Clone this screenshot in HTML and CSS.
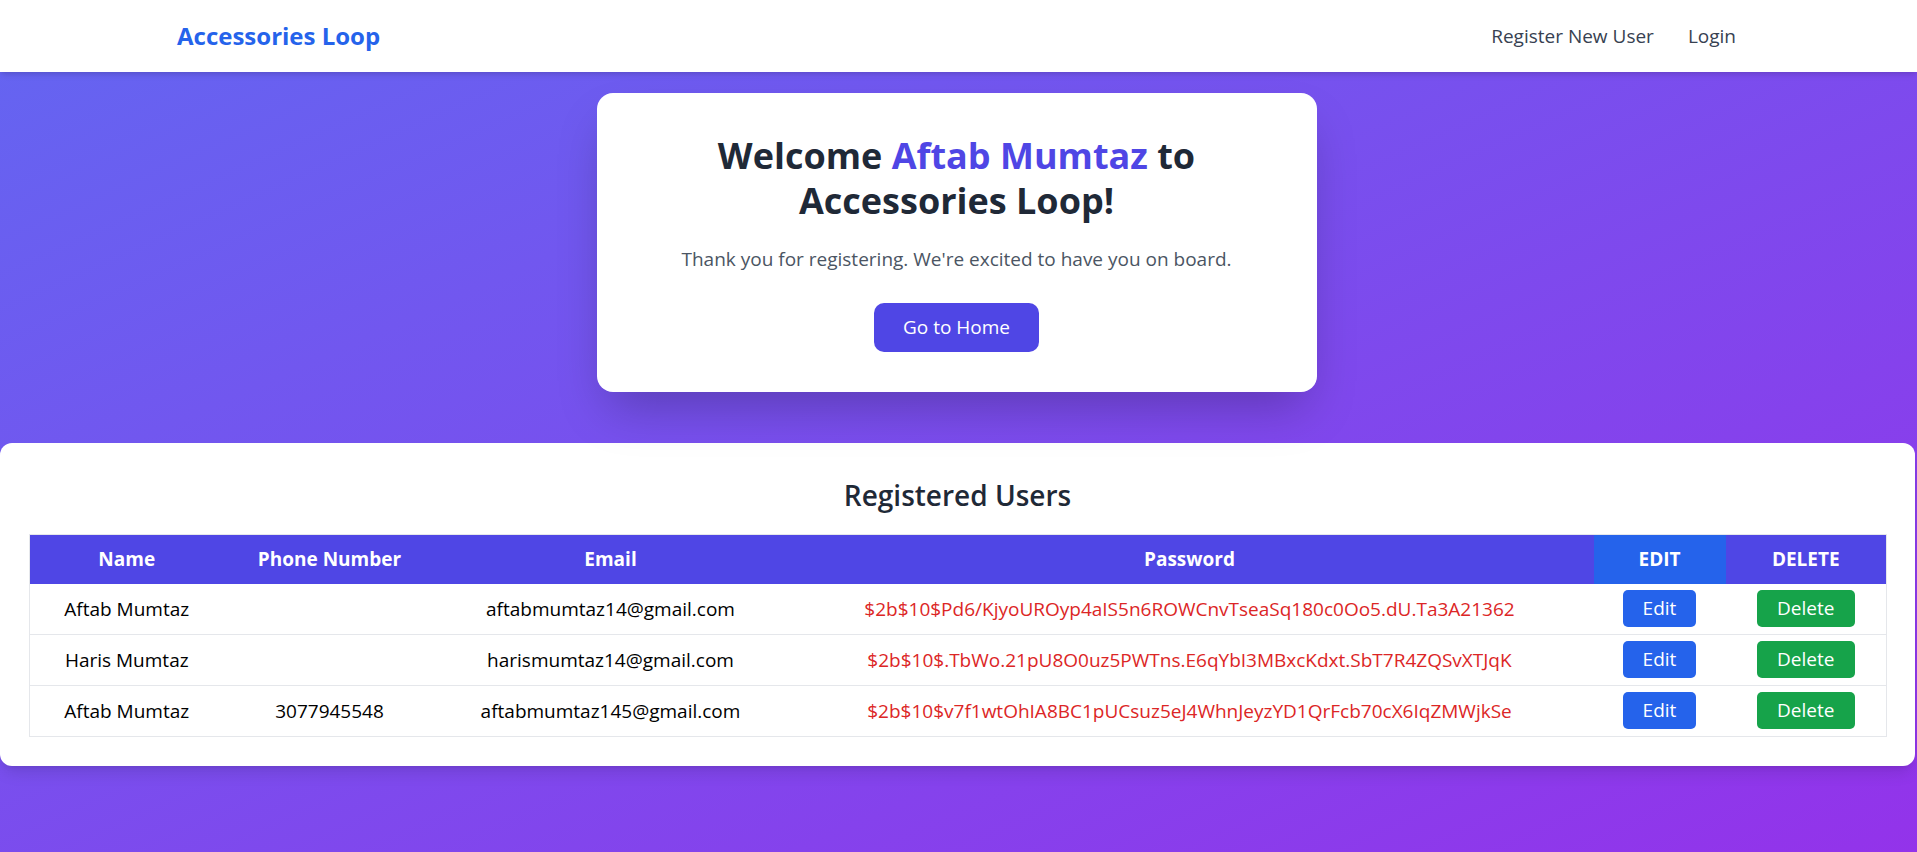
FILE: index.html
```html
<!DOCTYPE html>
<html lang="en">
<head>
<meta charset="utf-8">
<title>Accessories Loop</title>
<link rel="stylesheet" href="styles.css">
</head>
<body>
<div class="page">
  <nav class="navbar">
    <a class="logo" href="#">Accessories Loop</a>
    <div class="nav-links">
      <a href="#">Register New User</a>
      <a href="#">Login</a>
    </div>
  </nav>

  <section class="hero">
    <div class="welcome-card">
      <h1 class="welcome-title">Welcome <span class="accent">Aftab Mumtaz</span> to<br>Accessories Loop!</h1>
      <p class="welcome-text">Thank you for registering. We're excited to have you on board.</p>
      <a class="btn-home" href="#">Go to Home</a>
    </div>
  </section>

  <section class="users-card">
    <h2 class="users-title">Registered Users</h2>
    <table class="users-table">
      <colgroup>
        <col class="c-name"><col class="c-phone"><col class="c-email"><col class="c-pass"><col class="c-edit"><col class="c-del">
      </colgroup>
      <thead>
        <tr>
          <th>Name</th>
          <th>Phone Number</th>
          <th>Email</th>
          <th>Password</th>
          <th class="th-edit">EDIT</th>
          <th>DELETE</th>
        </tr>
      </thead>
      <tbody>
        <tr>
          <td>Aftab Mumtaz</td>
          <td></td>
          <td>aftabmumtaz14@gmail.com</td>
          <td class="pass">$2b$10$Pd6/KjyoUROyp4aIS5n6ROWCnvTseaSq180c0Oo5.dU.Ta3A21362</td>
          <td><button class="btn btn-edit">Edit</button></td>
          <td><button class="btn btn-delete">Delete</button></td>
        </tr>
        <tr>
          <td>Haris Mumtaz</td>
          <td></td>
          <td>harismumtaz14@gmail.com</td>
          <td class="pass">$2b$10$.TbWo.21pU8O0uz5PWTns.E6qYbI3MBxcKdxt.SbT7R4ZQSvXTJqK</td>
          <td><button class="btn btn-edit">Edit</button></td>
          <td><button class="btn btn-delete">Delete</button></td>
        </tr>
        <tr>
          <td>Aftab Mumtaz</td>
          <td>3077945548</td>
          <td>aftabmumtaz145@gmail.com</td>
          <td class="pass">$2b$10$v7f1wtOhIA8BC1pUCsuz5eJ4WhnJeyzYD1QrFcb70cX6IqZMWjkSe</td>
          <td><button class="btn btn-edit">Edit</button></td>
          <td><button class="btn btn-delete">Delete</button></td>
        </tr>
      </tbody>
    </table>
  </section>
</div>
</body>
</html>
```

FILE: styles.css
```css
* { box-sizing: border-box; }

html, body {
  margin: 0;
  padding: 0;
}

body {
  font-family: "Open Sans", "Noto Sans", sans-serif;
  color: #1f2937;
}

.page {
  min-height: 100vh;
  background: linear-gradient(to bottom right, #6366f1, #9333ea);
  padding-bottom: 40px;
}

.navbar {
  height: 72px;
  background: #ffffff;
  display: flex;
  align-items: center;
  justify-content: space-between;
  padding: 0 181px 0 177px;
  box-shadow: 0 4px 6px -1px rgba(0,0,0,0.1), 0 2px 4px -2px rgba(0,0,0,0.1);
  position: relative;
  z-index: 1;
}

.logo {
  font-size: 24px;
  line-height: 32px;
  font-weight: 700;
  color: #2563eb;
  text-decoration: none;
}

.nav-links {
  display: flex;
  gap: 34px;
}

.nav-links a {
  font-size: 19px;
  line-height: 28px;
  font-weight: 500;
  color: #374151;
  text-decoration: none;
}

.hero {
  display: flex;
  justify-content: center;
  padding: 21px 4px 0 0;
}

.welcome-card {
  width: 720px;
  background: #ffffff;
  border-radius: 16px;
  padding: 40px;
  text-align: center;
  box-shadow: 0 25px 50px -12px rgba(0,0,0,0.25);
}

.welcome-title {
  margin: 0;
  font-size: 36px;
  line-height: 45px;
  font-weight: 700;
  color: #1f2937;
}

.accent {
  color: #4f46e5;
}

.welcome-text {
  margin: 22px 0 30px;
  font-size: 19px;
  line-height: 28px;
  color: #4b5563;
}

.btn-home {
  display: inline-block;
  background: #4f46e5;
  color: #ffffff;
  font-size: 19px;
  line-height: 28px;
  padding: 10px 29px 11px;
  border-radius: 10px;
  text-decoration: none;
}

.users-card {
  margin: 51px 2px 0 0;
  background: #ffffff;
  border-radius: 12px;
  padding: 34px 29px 29px;
  box-shadow: 0 10px 15px -3px rgba(0,0,0,0.1), 0 4px 6px -4px rgba(0,0,0,0.1);
}

.users-title {
  margin: 0 0 21px;
  text-align: center;
  font-size: 28px;
  line-height: 36px;
  font-weight: 600;
  color: #1f2937;
}

.users-table {
  width: 100%;
  table-layout: fixed;
  border-collapse: collapse;
  border: 1px solid #e5e7eb;
}

.c-name { width: 194px; }
.c-phone { width: 212px; }
.c-email { width: 350px; }
.c-pass { width: 808px; }
.c-edit { width: 132px; }
.c-del { width: 161px; }

.users-table th {
  background: #4f46e5;
  color: #ffffff;
  font-size: 19px;
  line-height: 28px;
  font-weight: 700;
  padding: 10px 8px 11px;
  text-align: center;
}

.users-table th.th-edit {
  background: #2563eb;
}

.users-table td {
  text-align: center;
  font-size: 19px;
  line-height: 28px;
  color: #000000;
  padding: 6px 8px 7px;
  border-bottom: 1px solid #e5e7eb;
  white-space: nowrap;
}

.users-table td.pass {
  color: #dc2626;
}

.btn {
  font-family: inherit;
  font-size: 19px;
  line-height: 29px;
  padding: 4px 0;
  border: none;
  border-radius: 5px;
  color: #ffffff;
  cursor: pointer;
  vertical-align: middle;
}

.btn-edit { background: #2563eb; width: 73px; }
.btn-delete { background: #16a34a; width: 98px; }
```
